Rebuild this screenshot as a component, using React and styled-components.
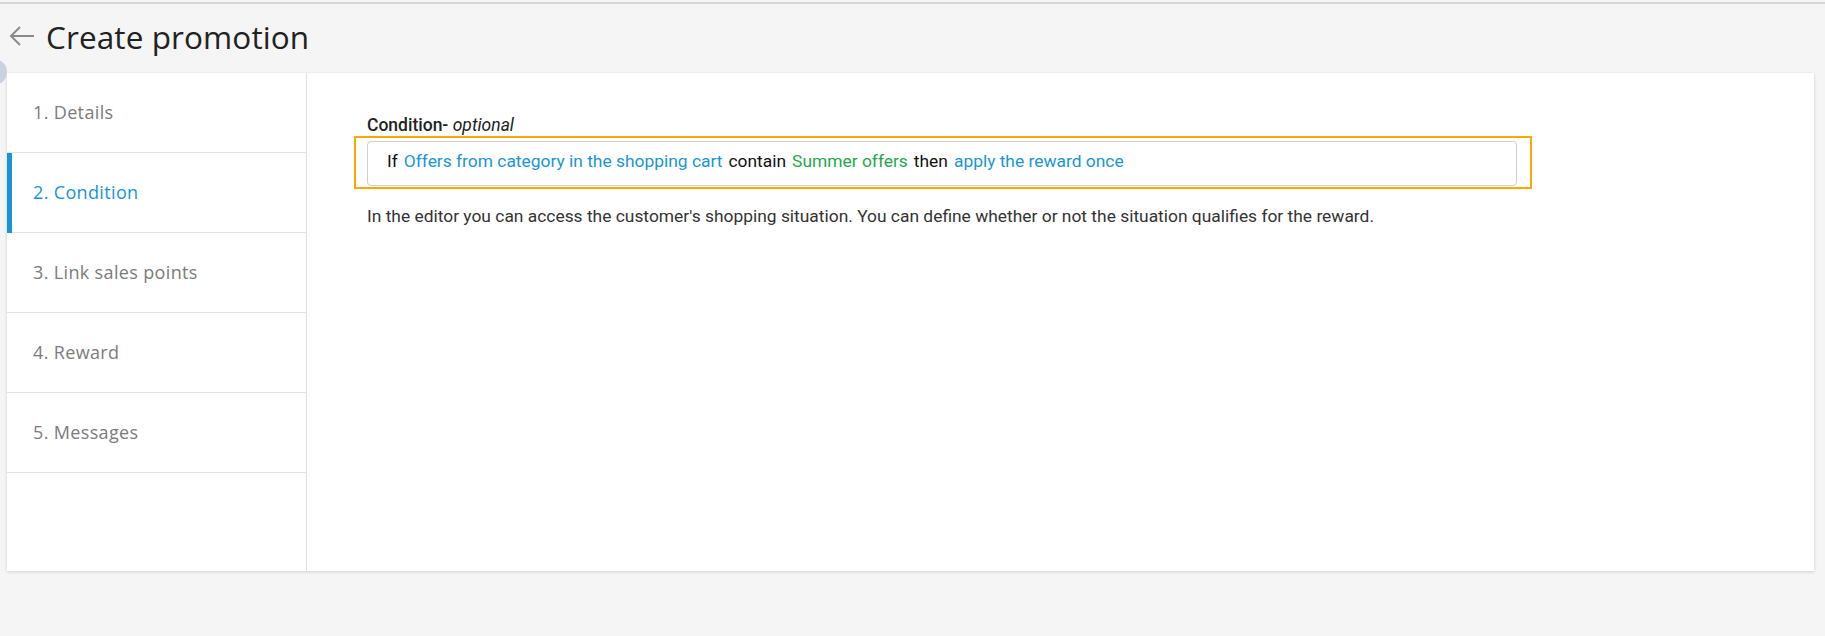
import React from 'react';
import styled, { createGlobalStyle } from 'styled-components';

const GlobalStyle = createGlobalStyle`
  html, body {
    margin: 0;
    padding: 0;
    background: #f5f5f5;
  }
  * {
    box-sizing: border-box;
  }
`;

const Page = styled.div`
  position: relative;
  min-height: 636px;
  border-top: 2px solid #f5f5f5;
  overflow: hidden;
`;

const TopRule = styled.div`
  height: 2px;
  background: #d6d6d6;
`;

const Header = styled.div`
  display: flex;
  align-items: center;
  gap: 11px;
  height: 69px;
  padding: 0 0 5px 9px;
`;

const BackButton = styled.button`
  display: flex;
  align-items: center;
  padding: 0;
  border: 0;
  background: none;
  color: #8a8a8a;
  cursor: pointer;
`;

const Title = styled.h1`
  margin: 0;
  font-family: 'Open Sans', sans-serif;
  font-size: 31.5px;
  font-weight: 400;
  letter-spacing: 0.1px;
  color: #222;
`;

const Avatar = styled.div`
  position: absolute;
  left: -19px;
  top: 57px;
  width: 26px;
  height: 26px;
  border-radius: 50%;
  background: #c9d3df;
`;

const Card = styled.div`
  display: flex;
  height: 498px;
  margin: 0 11px 0 7px;
  background: #fff;
  box-shadow: 0 1px 3px rgba(0, 0, 0, 0.16);
`;

const Steps = styled.nav`
  width: 300px;
  flex-shrink: 0;
  border-right: 1px solid #e0e0e0;
`;

const Step = styled.div`
  position: relative;
  display: flex;
  align-items: center;
  height: 80px;
  padding: 0 0 2px 26px;
  border-bottom: 1px solid #e2e2e2;
  font-family: 'Open Sans', sans-serif;
  font-size: 18px;
  letter-spacing: 0.35px;
  color: ${(p) => (p.$active ? '#1795d8' : '#7b7b7b')};

  &::before {
    content: '';
    position: absolute;
    left: 0;
    top: 0;
    bottom: -1px;
    width: 5px;
    background: ${(p) => (p.$active ? '#1795d8' : 'transparent')};
  }
`;

const Content = styled.section`
  flex: 1;
  padding: 42px 60px;
  font-family: Roboto, 'Liberation Sans', sans-serif;
`;

const Column = styled.div`
  width: 1150px;
`;

const Label = styled.div`
  font-size: 17.5px;
  line-height: 20px;
  font-weight: 500;
  color: #222;
  margin-bottom: 1px;

  em {
    font-weight: 400;
  }
`;

const Highlight = styled.div`
  margin: 0 -15px 0 -13px;
  padding: 3px 13px 1px 11px;
  border: 2px solid #ffa600;
`;

const ConditionInput = styled.div`
  display: flex;
  align-items: center;
  gap: 6px;
  height: 45px;
  padding: 0 0 5px 19px;
  border: 1px solid #cfcfcf;
  border-radius: 4px;
  font-size: 17.4px;
  color: #111;
`;

const Token = styled.span`
  color: ${(p) => (p.$tone === 'blue' ? '#1a95d6' : p.$tone === 'green' ? '#1fa84a' : '#111')};
`;

const Hint = styled.p`
  margin: 16px 0 0;
  font-size: 17.4px;
  line-height: 22px;
  color: #333;
`;

const steps = ['1. Details', '2. Condition', '3. Link sales points', '4. Reward', '5. Messages'];

const ArrowLeft = () => (
  <svg width="26" height="20" viewBox="0 0 26 20" fill="none" stroke="currentColor" strokeWidth="2">
    <path d="M2 10H25" />
    <path d="M11 1L2 10L11 19" />
  </svg>
);

export default function App() {
  return (
    <>
      <GlobalStyle />
      <Page>
        <TopRule />
        <Avatar />
        <Header>
          <BackButton aria-label="Back">
            <ArrowLeft />
          </BackButton>
          <Title>Create promotion</Title>
        </Header>
        <Card>
          <Steps>
            {steps.map((s, i) => (
              <Step key={s} $active={i === 1}>
                {s}
              </Step>
            ))}
          </Steps>
          <Content>
            <Column>
              <Label>
                Condition- <em>optional</em>
              </Label>
              <Highlight>
                <ConditionInput>
                  <Token>If</Token>
                  <Token $tone="blue">Offers from category in the shopping cart</Token>
                  <Token>contain</Token>
                  <Token $tone="green">Summer offers</Token>
                  <Token>then</Token>
                  <Token $tone="blue">apply the reward once</Token>
                </ConditionInput>
              </Highlight>
              <Hint>
                In the editor you can access the customer's shopping situation. You can define whether or
                not the situation qualifies for the reward.
              </Hint>
            </Column>
          </Content>
        </Card>
      </Page>
    </>
  );
}
